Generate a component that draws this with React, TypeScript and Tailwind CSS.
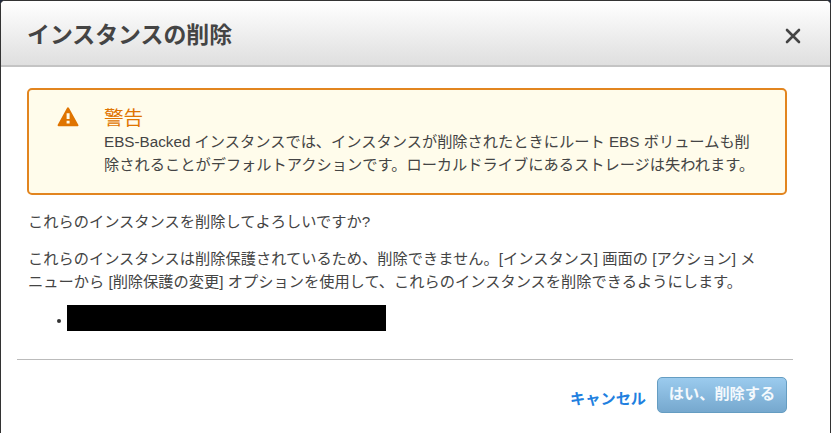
import React from 'react'

const WarningIcon = () => (
    <svg width="22" height="20" viewBox="0 0 22 20" className="block">
        <path
            d="M11 1.3 L20.4 18.3 H1.6 Z"
            fill="#df7400"
            stroke="#df7400"
            strokeWidth="2"
            strokeLinejoin="round"
        />
        <path d="M9.6 6.2 H12.6 V12 H9.6 Z M9.6 13.7 H12.6 V16.4 H9.6 Z" fill="#fffceb" />
    </svg>
)

const CloseIcon = () => (
    <svg width="16" height="16" viewBox="0 0 16 16" className="block">
        <path d="M2 2 L14 14 M14 2 L2 14" stroke="#444" strokeWidth="2.6" strokeLinecap="round" />
    </svg>
)

const Warning = () => {
    return (
        <div className="flex h-[107px] w-[760px] rounded-[5px] border-2 border-[#e2851f] bg-[#fffceb]">
            <div className="ml-7 mt-[17px] w-[47px]">
                <WarningIcon />
            </div>
            <div>
                <h3 className="mt-[15px] h-[26px] text-[19.6px] leading-[26px] text-[#df7400]">警告</h3>
                <p className="whitespace-nowrap leading-[22.5px]">
                    EBS-Backed インスタンスでは、インスタンスが削除されたときにルート EBS ボリュームも削
                    <br />
                    除されることがデフォルトアクションです。ローカルドライブにあるストレージは失われます。
                </p>
            </div>
        </div>
    )
}

const App = () => {
    return (
        <div className="h-[433px] w-[831px] overflow-hidden bg-[#222a3d] font-['Liberation_Sans','Noto_Sans_CJK_JP',sans-serif] text-[15.24px] text-[#444]">
            <div className="h-full overflow-hidden rounded-t-[5px] border-x border-t border-[#333] bg-white">
                <div className="flex h-[66px] items-center justify-between border-b-2 border-[#c4c4c4] bg-linear-to-b from-white to-[#dfdfdf] pl-[26px] pr-[29px]">
                    <h2 className="mt-[3px] text-[22.9px] font-bold leading-[32px]">インスタンスの削除</h2>
                    <button className="mt-[6px]" aria-label="閉じる">
                        <CloseIcon />
                    </button>
                </div>

                <div className="pl-[26px] pt-[21px]">
                    <Warning />
                    <p className="ml-px mt-[15px] leading-[23px]">これらのインスタンスを削除してよろしいですか?</p>
                    <p className="ml-px mt-[14px] whitespace-nowrap leading-[23px]">
                        これらのインスタンスは削除保護されているため、削除できません。[インスタンス] 画面の [アクション] メ
                        <br />
                        ニューから [削除保護の変更] オプションを使用して、これらのインスタンスを削除できるようにします。
                    </p>
                    <ul className="mt-[12px]">
                        <li className="flex items-center pl-[30px]">
                            <span className="mt-[5px] h-1 w-1 rounded-full bg-[#333]" />
                            <span className="ml-[6px] h-[26px] w-[319px] bg-black" />
                        </li>
                    </ul>
                </div>

                <div className="ml-4 mt-[28px] flex w-[776px] items-start justify-end border-t border-[#bbb] pr-[6px] pt-[17px] font-bold">
                    <button className="mt-[10px] text-[15.2px] leading-[23px] text-[#2180df]">キャンセル</button>
                    <button className="ml-[11px] h-[36px] w-[130px] rounded-[5px] border border-[#659dc2] bg-linear-to-b from-[#9bcbee] to-[#76a8ce] pb-[2px] text-[15.2px] text-[#f4f9fd]">
                        はい、削除する
                    </button>
                </div>
            </div>
        </div>
    )
}

export default App
